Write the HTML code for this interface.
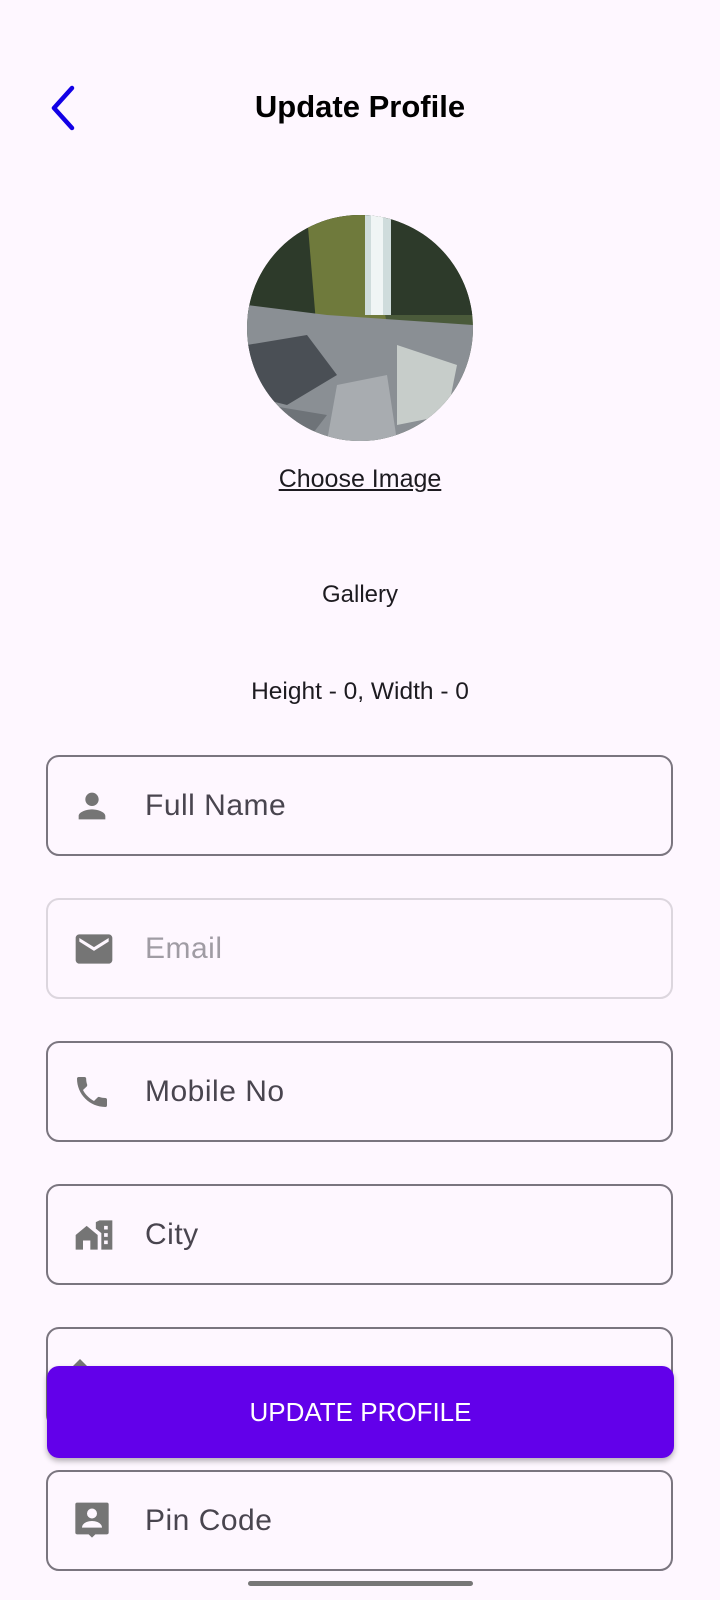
<!DOCTYPE html>
<html><head><meta charset="utf-8"><style>
body{margin:0;width:720px;height:1600px;background:#fef7ff;font-family:"Liberation Sans",sans-serif;position:relative;overflow:hidden}
.a{position:absolute}
.f{position:absolute;left:46px;width:627px;height:101px;border:2px solid #7a757f;border-radius:13px;box-sizing:border-box}
.f span{position:absolute;left:97px;top:50%;transform:translateY(-50%);font-size:30px;color:#49454f;letter-spacing:0.5px}
.f svg{position:absolute;left:24px;top:50%;transform:translateY(-50%)}
.c{text-align:center;width:720px;left:0;color:#1d1b20}
</style></head><body>
<svg class="a" style="left:46px;top:84px" width="34" height="48" viewBox="0 0 34 48"><path d="M26 4 L8 24 L26 44" fill="none" stroke="#1200e6" stroke-width="4.5" stroke-linecap="round" stroke-linejoin="round"/></svg>
<div class="a c" style="top:89px;font-size:31px;font-weight:bold;color:#000">Update Profile</div>
<svg class="a" style="left:247px;top:215px" width="226" height="226" viewBox="0 0 226 226">
<defs><clipPath id="cc"><circle cx="113" cy="113" r="113"/></clipPath></defs>
<g clip-path="url(#cc)">
<rect width="226" height="226" fill="#4a5a3a"/>
<rect x="0" y="0" width="226" height="100" fill="#2d3a2a"/>
<path d="M60 0 L120 0 L140 110 L70 120 Z" fill="#6f7a3c"/>
<rect x="118" y="0" width="26" height="100" fill="#cfdcdc"/>
<rect x="124" y="0" width="12" height="100" fill="#f0f5f5"/>
<path d="M0 90 L80 100 L226 110 L226 226 L0 226 Z" fill="#8a8f94"/>
<path d="M0 130 L60 120 L90 160 L40 190 L0 180 Z" fill="#4a4f55"/>
<path d="M150 130 L210 150 L200 200 L150 210 Z" fill="#c7cdca"/>
<path d="M90 170 L140 160 L150 226 L80 226 Z" fill="#a8acb0"/>
<path d="M20 190 L80 200 L60 226 L0 226Z" fill="#6e7378"/>
</g></svg>
<div class="a c" style="top:465px;font-size:25px;text-decoration:underline">Choose Image</div>
<div class="a c" style="top:581px;font-size:24px">Gallery</div>
<div class="a c" style="top:678px;font-size:24.5px">Height - 0, Width - 0</div>

<div class="f" style="top:755px"><svg width="40" height="40" viewBox="0 0 24 24"><path fill="#757575" d="M12 12c2.2 0 4-1.8 4-4s-1.8-4-4-4-4 1.8-4 4 1.8 4 4 4zm0 2c-2.7 0-8 1.3-8 4v2h16v-2c0-2.7-5.3-4-8-4z"/></svg><span>Full Name</span></div>
<div class="f" style="top:898px;border-color:#dcd6de"><svg width="44" height="44" viewBox="0 0 24 24"><path fill="#757575" d="M20 4H4c-1.1 0-2 .9-2 2v12c0 1.1.9 2 2 2h16c1.1 0 2-.9 2-2V6c0-1.1-.9-2-2-2zm0 4l-8 5-8-5V6l8 5 8-5v2z"/></svg><span style="color:#a09ca4">Email</span></div>
<div class="f" style="top:1041px"><svg width="40" height="40" viewBox="0 0 24 24"><path fill="#757575" d="M6.6 10.8c1.4 2.8 3.8 5.1 6.6 6.6l2.2-2.2c.3-.3.7-.4 1-.2 1.1.4 2.300.6 3.6.6.6 0 1 .4 1 1V20c0 .6-.4 1-1 1-9.4 0-17-7.6-17-17 0-.6.4-1 1-1h3.5c.6 0 1 .4 1 1 0 1.3.2 2.5.6 3.6.1.3 0 .7-.2 1l-2.3 2.2z"/></svg><span>Mobile No</span></div>
<div class="f" style="top:1184px"><svg width="44" height="44" viewBox="0 0 24 24"><path fill="#757575" d="M2 12L8 7l6 5v8H2zM6 15v5h4v-5zM15 4h7v16h-6V11l-3-2.5V5zM17.5 7v2h2V7zM17.5 11v2h2v-2zM17.5 15v2h2v-2z"/></svg><span>City</span></div>
<div class="f" style="top:1327px"><svg style="top:30px;transform:none" width="16" height="12" viewBox="0 0 16 12"><path fill="#757575" d="M8 0L16 8V12H0V8z"/></svg></div>
<div class="a" style="left:47px;top:1366px;width:627px;height:92px;background:#6200ea;border-radius:12px;box-shadow:0 3px 6px rgba(0,0,0,.3);color:#fff;font-size:26px;text-align:center;line-height:92px">UPDATE PROFILE</div>
<div class="f" style="top:1470px"><svg width="40" height="44" viewBox="0 0 24 26"><path fill="#757575" d="M3 2h18c.6 0 1 .4 1 1v17c0 .6-.4 1-1 1h-7l-2 2-2-2H3c-.6 0-1-.4-1-1V3c0-.6.4-1 1-1zm9 3.5a3 3 0 100 6 3 3 0 000-6zM6 17h12c0-2.5-3-4-6-4s-6 1.5-6 4z"/></svg><span>Pin Code</span></div>
<div class="a" style="left:248px;top:1581px;width:225px;height:5px;border-radius:3px;background:#777"></div>
</body></html>
